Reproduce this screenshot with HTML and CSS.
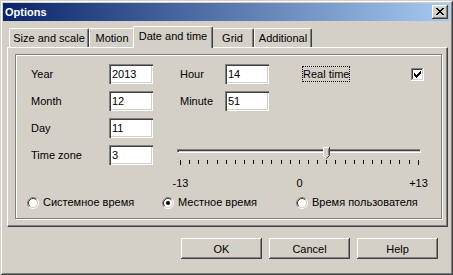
FILE: index.html
```html
<!DOCTYPE html>
<html>
<head>
<meta charset="utf-8">
<link rel="stylesheet" href="styles.css">
</head>
<body>
<div class="window">
  <div class="titlebar">
    <span class="title">Options</span>
    <div class="close">
      <svg width="8" height="7" viewBox="0 0 8 7" shape-rendering="crispEdges"><path fill="#000" d="M0 0h2v1H0z M6 0h2v1H6z M1 1h2v1H1z M5 1h2v1H5z M2 2h4v1H2z M3 3h2v1H3z M2 4h4v1H2z M1 5h2v1H1z M5 5h2v1H5z M0 6h2v1H0z M6 6h2v1H6z"/></svg>
    </div>
  </div>
  <div class="client">
    <div class="tabs">
      <div class="tab w1">Size and scale</div>
      <div class="tab w2">Motion</div>
      <div class="tab w3 active">Date and time</div>
      <div class="tab w4">Grid</div>
      <div class="tab w5">Additional</div>
    </div>
    <div class="panel">
      <div class="group">
        <div class="fields">
          <span class="c1">Year</span>
          <div class="edit c2">2013</div>
          <span class="c4">Hour</span>
          <div class="edit c5">14</div>
          <span class="c7 focus">Real time</span>
          <span class="c8 check">
            <svg width="13" height="13" viewBox="0 0 13 13" shape-rendering="crispEdges">
              <rect width="13" height="13" fill="#fff"/>
              <path d="M0 0h12v1H1v11H0z" fill="#808080"/>
              <path d="M1 1h10v1H2v9H1z" fill="#404040"/>
              <path d="M12 0h1v13H0v-1h12z" fill="#fff"/>
              <path d="M11 1h1v11H1v-1h10z" fill="#d4d0c8"/>
              <path fill="#000" d="M9 3h1v1H9z M8 4h2v1H8z M3 5h1v1H3z M7 5h3v1H7z M3 6h2v1H3z M6 6h3v1H6z M3 7h5v1H3z M4 8h3v1H4z M5 9h1v1H5z"/>
            </svg>
          </span>

          <span class="c1">Month</span>
          <div class="edit c2">12</div>
          <span class="c4">Minute</span>
          <div class="edit c5">51</div>

          <span class="c1">Day</span>
          <div class="edit c2">11</div>

          <span class="c1">Time zone</span>
          <div class="edit c2">3</div>
          <div class="slider">
            <div class="track"></div>
            <div class="ticks">
              <i class="tick end"></i><i class="tick"></i><i class="tick"></i><i class="tick"></i><i class="tick"></i><i class="tick"></i><i class="tick"></i><i class="tick"></i><i class="tick"></i><i class="tick"></i><i class="tick"></i><i class="tick"></i><i class="tick"></i><i class="tick"></i><i class="tick"></i><i class="tick"></i><i class="tick"></i><i class="tick"></i><i class="tick"></i><i class="tick"></i><i class="tick"></i><i class="tick"></i><i class="tick"></i><i class="tick"></i><i class="tick"></i><i class="tick"></i><i class="tick end"></i>
            </div>
            <svg class="thumb" style="left:146px" width="7" height="12" viewBox="0 0 7 12">
              <path d="M0.5 0.5H6.5V8.5L3.5 11.5L0.5 8.5Z" fill="#d4d0c8"/>
              <path d="M0.5 8.5V0.5H6" fill="none" stroke="#fff"/>
              <path d="M0.5 8.5L3 11" fill="none" stroke="#fff"/>
              <path d="M6.5 0V8.5L3.5 11.5" fill="none" stroke="#404040"/>
              <path d="M5.5 1.5V8.2" fill="none" stroke="#808080"/>
            </svg>
          </div>
        </div>
        <div class="scale">
          <span class="mark">-13</span>
          <span class="mark">0</span>
          <span class="mark">+13</span>
        </div>
        <div class="radios">
          <label class="radio">
            <svg width="12" height="12" viewBox="0 0 12 12">
              <circle cx="6" cy="6" r="4.5" fill="#fff"/>
              <path d="M2.11 9.89A5.5 5.5 0 0 1 9.89 2.11" fill="none" stroke="#808080"/>
              <path d="M2.82 9.18A4.5 4.5 0 0 1 9.18 2.82" fill="none" stroke="#404040"/>
              <path d="M9.89 2.11A5.5 5.5 0 0 1 2.11 9.89" fill="none" stroke="#fff"/>
              <path d="M9.18 2.82A4.5 4.5 0 0 1 2.82 9.18" fill="none" stroke="#d4d0c8"/>
            </svg>
            <span>Системное время</span>
          </label>
          <label class="radio">
            <svg width="12" height="12" viewBox="0 0 12 12">
              <circle cx="6" cy="6" r="4.5" fill="#fff"/>
              <path d="M2.11 9.89A5.5 5.5 0 0 1 9.89 2.11" fill="none" stroke="#808080"/>
              <path d="M2.82 9.18A4.5 4.5 0 0 1 9.18 2.82" fill="none" stroke="#404040"/>
              <path d="M9.89 2.11A5.5 5.5 0 0 1 2.11 9.89" fill="none" stroke="#fff"/>
              <path d="M9.18 2.82A4.5 4.5 0 0 1 2.82 9.18" fill="none" stroke="#d4d0c8"/>
              <circle cx="6" cy="6" r="2" fill="#000"/>
            </svg>
            <span>Местное время</span>
          </label>
          <label class="radio">
            <svg width="12" height="12" viewBox="0 0 12 12">
              <circle cx="6" cy="6" r="4.5" fill="#fff"/>
              <path d="M2.11 9.89A5.5 5.5 0 0 1 9.89 2.11" fill="none" stroke="#808080"/>
              <path d="M2.82 9.18A4.5 4.5 0 0 1 9.18 2.82" fill="none" stroke="#404040"/>
              <path d="M9.89 2.11A5.5 5.5 0 0 1 2.11 9.89" fill="none" stroke="#fff"/>
              <path d="M9.18 2.82A4.5 4.5 0 0 1 2.82 9.18" fill="none" stroke="#d4d0c8"/>
            </svg>
            <span>Время пользователя</span>
          </label>
        </div>
      </div>
    </div>
    <div class="buttons">
      <div class="btn">OK</div>
      <div class="btn">Cancel</div>
      <div class="btn">Help</div>
    </div>
  </div>
</div>
</body>
</html>
```
FILE: styles.css
```css
body {
  margin: 0;
  font: 11px "Liberation Sans", Arial, sans-serif;
  color: #000;
}

.window {
  width: 453px;
  height: 275px;
  box-sizing: border-box;
  background: #d4d0c8;
  padding: 3px;
  box-shadow: inset 1px 1px 0 #d4d0c8, inset -1px -1px 0 #404040,
              inset 2px 2px 0 #fff, inset -2px -2px 0 #808080;
  display: flex;
  flex-direction: column;
}

.titlebar {
  height: 18px;
  flex: none;
  display: flex;
  align-items: center;
  padding-left: 2px;
  background: linear-gradient(to right, #0a246a, #a6caf0);
  color: #fff;
  font-weight: bold;
}

.close {
  margin-left: auto;
  margin-right: 2px;
  width: 16px;
  height: 14px;
  box-sizing: border-box;
  background: #d4d0c8;
  box-shadow: inset -1px -1px 0 #404040, inset 1px 1px 0 #fff,
              inset -2px -2px 0 #808080;
  display: flex;
  align-items: center;
  justify-content: center;
}

.close svg {
  display: block;
  margin-top: -1px;
}

.client {
  flex: 1;
  padding: 5px 0 0 4px;
  display: flex;
  flex-direction: column;
}

.tabs {
  display: flex;
  align-items: flex-end;
  height: 21px;
  padding-left: 2px;
}

.tab {
  height: 19px;
  box-sizing: border-box;
  border-left: 1px solid #fff;
  border-top: 1px solid #fff;
  border-right: 1px solid #404040;
  border-radius: 2px 2px 0 0;
  box-shadow: inset -1px 0 0 #808080;
  background: #d4d0c8;
  display: flex;
  align-items: center;
  justify-content: center;
  white-space: nowrap;
}

.w1 { width: 80px; }
.w2 { width: 46px; }
.w3 { width: 76px; }
.w4 { width: 43px; }
.w5 { width: 58px; }

.tab.active {
  width: 80px;
  height: 22px;
  margin: 0 -2px -1px;
  padding-bottom: 3px;
  position: relative;
  z-index: 2;
  box-shadow: inset -1px 0 0 #808080;
}

.panel {
  width: 441px;
  height: 180px;
  box-sizing: border-box;
  border-top: 1px solid #fff;
  border-left: 1px solid #fff;
  border-right: 1px solid #404040;
  border-bottom: 1px solid #404040;
  box-shadow: inset -1px -1px 0 #808080;
  padding: 6px 0 0 7px;
}

.group {
  width: 427px;
  height: 165px;
  box-sizing: border-box;
  border: 1px solid #808080;
  box-shadow: inset 1px 1px 0 #fff, 1px 1px 0 #fff;
  padding: 9px 0 0 15px;
}

.fields {
  display: grid;
  grid-template-columns: 78px 44px 27px 45px 44px 33px 109px 13px;
  grid-auto-rows: 20px;
  row-gap: 7px;
  align-items: center;
}

.c1 { grid-column: 1; }
.c2 { grid-column: 2; }
.c4 { grid-column: 4; }
.c5 { grid-column: 5; }
.c7 { grid-column: 7; }
.c8 { grid-column: 8; }

.edit {
  height: 20px;
  box-sizing: border-box;
  background: #fff;
  box-shadow: inset 1px 1px 0 #808080, inset 2px 2px 0 #404040,
              inset -1px -1px 0 #fff, inset -2px -2px 0 #d4d0c8;
  padding-left: 3px;
  line-height: 20px;
}

.focus {
  justify-self: start;
  border: 1px dotted #000;
  line-height: 14px;
  white-space: nowrap;
}

.check svg {
  display: block;
}

.slider {
  grid-column: 3 / -1;
  align-self: start;
  margin-left: 24px;
  width: 244px;
  height: 20px;
  box-sizing: border-box;
  padding-top: 4px;
  position: relative;
}

.track {
  height: 4px;
  box-sizing: border-box;
  border-top: 1px solid #808080;
  border-left: 1px solid #808080;
  border-bottom: 1px solid #fff;
  border-right: 1px solid #fff;
  box-shadow: inset 1px 1px 0 #404040;
}

.ticks {
  display: flex;
  justify-content: space-between;
  align-items: flex-start;
  width: 239px;
  margin: 7px 0 0 3px;
}

.tick {
  width: 1px;
  height: 4px;
  background: #000;
}

.tick.end {
  height: 5px;
}

.thumb {
  position: absolute;
  top: 2px;
  display: block;
}

.scale {
  display: flex;
  justify-content: space-between;
  width: 239px;
  margin: 12px 0 0 149px;
  line-height: 13px;
}

.mark {
  width: 1px;
  display: flex;
  justify-content: center;
  white-space: nowrap;
}

.radios {
  display: grid;
  grid-template-columns: 135px 134px auto;
  margin: 6px 0 0 -4px;
  line-height: 13px;
}

.radio {
  display: flex;
  align-items: center;
  gap: 4px;
  white-space: nowrap;
}

.radio svg {
  display: block;
  flex: none;
}

.buttons {
  display: flex;
  justify-content: flex-end;
  gap: 7px;
  margin-top: 11px;
  padding-right: 12px;
}

.btn {
  width: 81px;
  height: 21px;
  box-sizing: border-box;
  background: #d4d0c8;
  box-shadow: inset -1px -1px 0 #404040, inset 1px 1px 0 #fff,
              inset -2px -2px 0 #808080;
  display: flex;
  align-items: center;
  justify-content: center;
}
```
